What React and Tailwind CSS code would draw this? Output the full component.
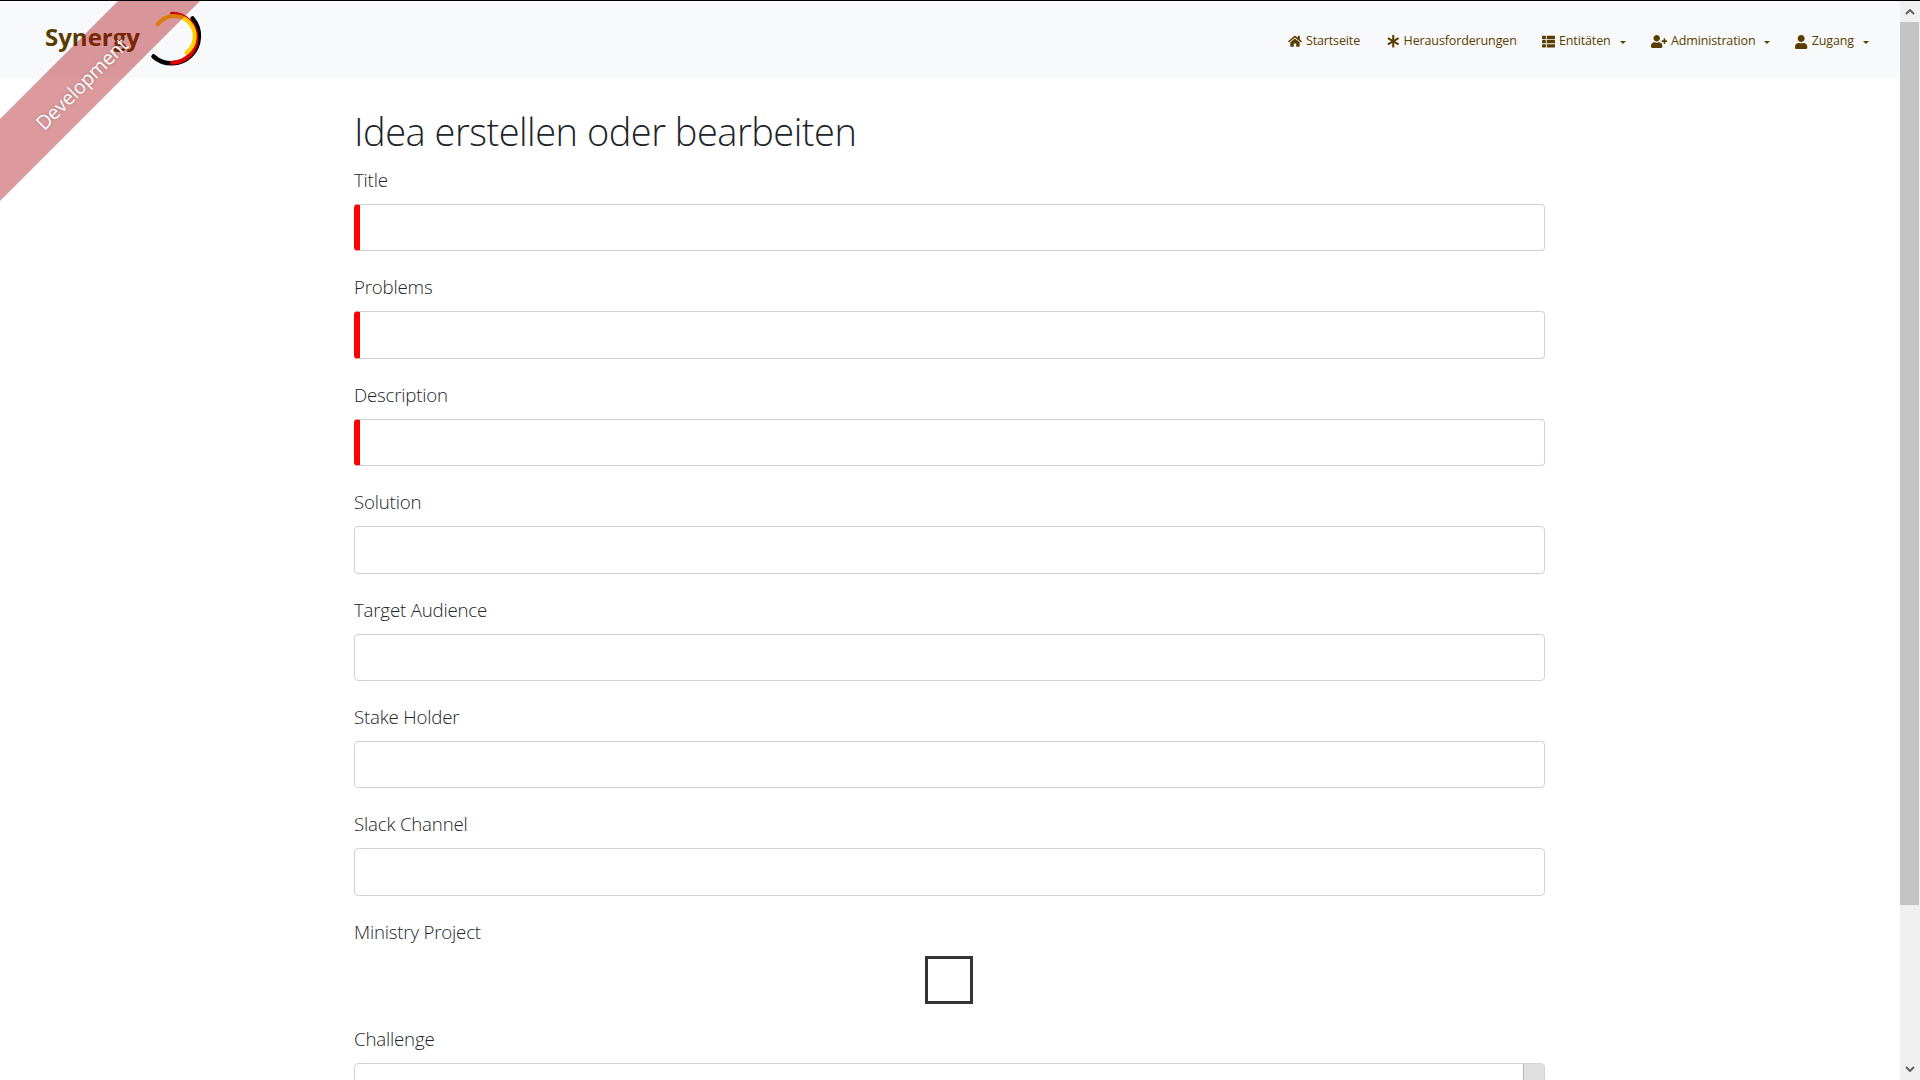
import React from "react";
import { FaHome, FaAsterisk, FaThList, FaUserPlus, FaUser } from "react-icons/fa";

const fields = [
  { label: "Title", required: true },
  { label: "Problems", required: true },
  { label: "Description", required: true },
  { label: "Solution" },
  { label: "Target Audience" },
  { label: "Stake Holder" },
  { label: "Slack Channel" },
];

const labelClass = "block text-[18.7px] tracking-[-0.2px] leading-[28px] mb-[10px] font-light text-[#212529]";

function NavItem({ icon, label, caret }) {
  return (
    <a className="flex items-center gap-1 text-[#5a3d00] text-[12.5px] tracking-[-0.13px] whitespace-nowrap">
      {icon}
      <span>{label}</span>
      {caret && (
        <span className="ml-[5px] mt-[1px] w-0 h-0 border-x-[3px] border-x-transparent border-t-[3.5px] border-t-[#5a3d00]" />
      )}
    </a>
  );
}

function Logo() {
  return (
    <svg width="60" height="64" viewBox="0 0 60 64" fill="none" className="absolute left-[146px] top-[9px]" strokeLinecap="round">
      <path d="M46.5 8.5 A27.3 27.3 0 0 1 7.5 46.5" stroke="#000" strokeWidth="4.5" />
      <path d="M26 3.7 A24.5 24.5 0 0 1 26 52.7" stroke="#dd0000" strokeWidth="4" />
      <path d="M11.7 14.3 A20.5 20.5 0 1 1 40.7 42.7" stroke="#ffce00" strokeWidth="4" />
    </svg>
  );
}

function Field({ label, required }) {
  return (
    <div className="mb-[22px]">
      <label className={labelClass}>{label}</label>
      <input
        type="text"
        className={`block w-full h-[47.4px] bg-white border border-[#ced4da] rounded-[4px] ${required ? "border-l-[6px] border-l-[#ff0000]" : ""}`}
      />
    </div>
  );
}

export default function App() {
  return (
    <div className="relative flex h-screen overflow-hidden bg-white font-['Open_Sans',sans-serif] border-t border-black">
      <div className="flex-1 min-w-0">
        <nav className="relative h-[77px] bg-[#f8f9fa] flex items-center justify-end gap-[25px] pr-[31px] pt-[4px]">
          <span className="absolute left-[45px] top-[20px] text-[24px] leading-[32px] font-bold text-[#5a3d00]">
            Synergy
          </span>
          <Logo />
          <NavItem icon={<FaHome className="w-[14px] h-[12.5px]" />} label="Startseite" />
          <NavItem icon={<FaAsterisk className="w-[12.5px] h-[12.5px] ml-[2px]" />} label="Herausforderungen" />
          <NavItem icon={<FaThList className="w-[13.3px] h-[13.3px]" />} label="Entitäten" caret />
          <NavItem icon={<FaUserPlus className="w-[16.3px] h-[13px]" />} label="Administration" caret />
          <NavItem icon={<FaUser className="w-[12.3px] h-[14px]" />} label="Zugang" caret />
        </nav>

        <main className="w-[1190.5px] ml-[354px]">
          <h1 className="text-[38px] tracking-[-0.5px] leading-[48px] font-light text-[#212529] mt-[29px] mb-[11px]">
            Idea erstellen oder bearbeiten
          </h1>
          {fields.map((f) => (
            <Field key={f.label} label={f.label} required={f.required} />
          ))}
          <div className="mb-[22px]">
            <label className={labelClass}>Ministry Project</label>
            <div className="h-[47.4px] flex justify-center">
              <div className="w-12 h-12 border-[3px] border-[#333333] bg-white" />
            </div>
          </div>
          <div>
            <label className={labelClass}>Challenge</label>
            <div className="flex justify-end h-[47.4px] bg-white border border-[#ced4da] rounded-[4px]">
              <div className="w-[21px] bg-[#e0e0e0] border-l border-[#b5b5b5]" />
            </div>
          </div>
        </main>
      </div>

      <aside className="w-5 shrink-0 flex flex-col bg-[#f0f0f0]">
        <div className="h-[21px] flex items-center justify-center">
          <svg width="10" height="6" viewBox="0 0 10 6" fill="none">
            <path d="M1 5 L5 1 L9 5" stroke="#606060" strokeWidth="2" />
          </svg>
        </div>
        <div className="h-[883px] bg-[#c4c4c4] mr-[1px]" />
        <div className="flex-1 flex items-end justify-center pb-[8px]">
          <svg width="10" height="6" viewBox="0 0 10 6" fill="none">
            <path d="M1 1 L5 5 L9 1" stroke="#606060" strokeWidth="2" />
          </svg>
        </div>
      </aside>

      <div className="absolute left-[-70.5px] top-[49.5px] w-[300px] h-[58px] pt-[7px] pr-[3px] -rotate-45 bg-[#a8030a]/40 flex items-center justify-center text-white text-[19.5px] tracking-[-0.2px] [text-shadow:0_0_3px_rgba(0,0,0,0.25)]">
        Development
      </div>
    </div>
  );
}
